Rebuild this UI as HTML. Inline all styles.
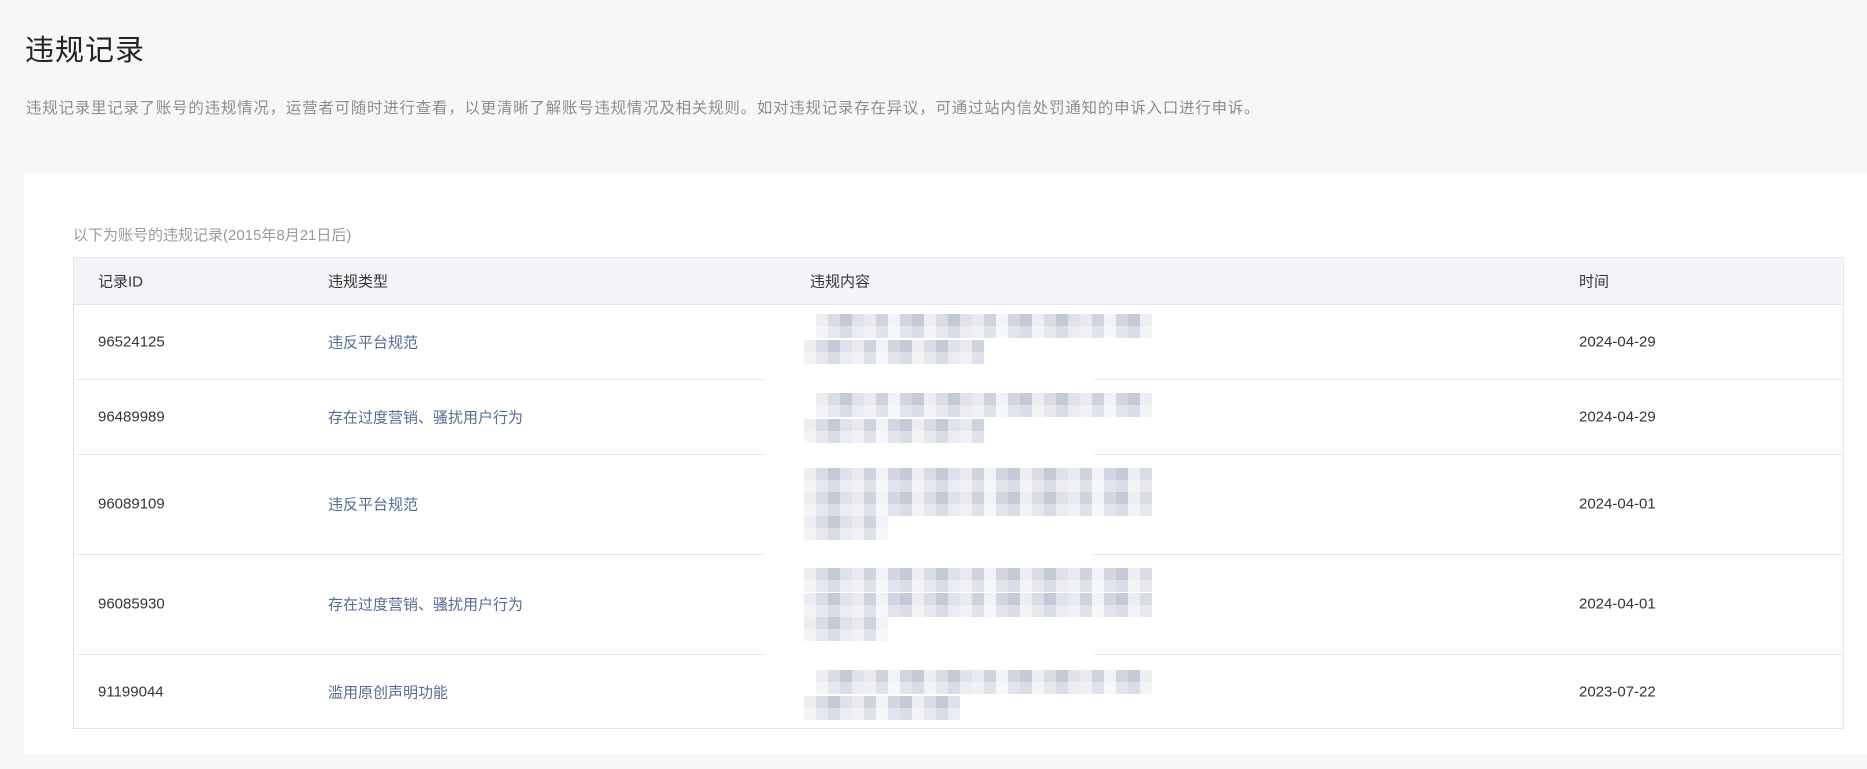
<!DOCTYPE html>
<html><head><meta charset="utf-8"><style>
*{margin:0;padding:0;box-sizing:border-box}
body{width:1867px;height:769px;background:#f6f7f9;font-family:"Liberation Sans","Noto Sans CJK SC",sans-serif;position:relative;overflow:hidden;color:#353535}
.abs{position:absolute;white-space:nowrap}
h1{position:absolute;left:25px;top:27px;font-size:29px;font-weight:normal;color:#222;letter-spacing:1px}
.desc{left:26px;top:96px;font-size:15.4px;color:#8d8d8d;letter-spacing:0.85px}
.card{position:absolute;left:24px;top:173px;right:0;height:581px;background:#fff}
.sub{left:73px;top:224px;font-size:15px;color:#9a9a9a}
.tbl{position:absolute;left:73px;top:257px;width:1771px;height:472px;border:1px solid #e4e6eb}
.hd{position:absolute;left:0;top:0;width:100%;height:47px;background:#f3f4f7;border-bottom:1px solid #e4e6eb}
.rb{position:absolute;left:0;width:100%;border-top:1px solid #e7e8ec}
.t{position:absolute;font-size:15px;white-space:nowrap;transform:translateY(-50%)}
.b{color:#576b95}
.px{position:absolute;height:24px;background:
linear-gradient(#fff0 0 12px,rgba(255,255,255,.35) 12px 24px),
repeating-linear-gradient(90deg,#eceef2 0 12px,#d9dce5 12px 24px,#c4c9d7 24px 36px,#dfe2ea 36px 48px,#e9eaf0 48px 60px,#cfd3de 60px 72px,#f2f3f6 72px 84px,#d3d6e1 84px 96px,#c6cad8 96px 108px)}
</style></head><body>
<h1>违规记录</h1>
<div class="abs desc">违规记录里记录了账号的违规情况，运营者可随时进行查看，以更清晰了解账号违规情况及相关规则。如对违规记录存在异议，可通过站内信处罚通知的申诉入口进行申诉。</div>
<div class="card"></div>
<div class="abs sub">以下为账号的违规记录(2015年8月21日后)</div>
<div class="tbl">
<div class="hd"></div>
<div class="rb" style="top:121px"></div>
<div class="rb" style="top:196px"></div>
<div class="rb" style="top:296px"></div>
<div class="rb" style="top:396px"></div>
<div style="position:absolute;left:690px;top:110px;width:330px;height:300px;background:#fff"></div>
</div>
<div class="t" style="left:98px;top:281px">记录ID</div>
<div class="t" style="left:328px;top:281px">违规类型</div>
<div class="t" style="left:810px;top:281px">违规内容</div>
<div class="t" style="left:1579px;top:281px">时间</div>

<div class="t" style="left:98px;top:342px">96524125</div>
<div class="t b" style="left:328px;top:342px">违反平台规范</div>
<div class="t" style="left:1579px;top:342px">2024-04-29</div>
<div class="px" style="left:816px;top:314px;width:336px"></div>
<div class="px" style="left:804px;top:340px;width:180px"></div>

<div class="t" style="left:98px;top:417px">96489989</div>
<div class="t b" style="left:328px;top:417px">存在过度营销、骚扰用户行为</div>
<div class="t" style="left:1579px;top:417px">2024-04-29</div>
<div class="px" style="left:816px;top:393px;width:336px"></div>
<div class="px" style="left:804px;top:419px;width:180px"></div>

<div class="t" style="left:98px;top:504px">96089109</div>
<div class="t b" style="left:328px;top:504px">违反平台规范</div>
<div class="t" style="left:1579px;top:504px">2024-04-01</div>
<div class="px" style="left:804px;top:468px;width:348px"></div>
<div class="px" style="left:804px;top:492px;width:348px"></div>
<div class="px" style="left:804px;top:516px;width:84px"></div>

<div class="t" style="left:98px;top:604px">96085930</div>
<div class="t b" style="left:328px;top:604px">存在过度营销、骚扰用户行为</div>
<div class="t" style="left:1579px;top:604px">2024-04-01</div>
<div class="px" style="left:804px;top:568px;width:348px"></div>
<div class="px" style="left:804px;top:593px;width:348px"></div>
<div class="px" style="left:804px;top:617px;width:84px"></div>

<div class="t" style="left:98px;top:692px">91199044</div>
<div class="t b" style="left:328px;top:692px">滥用原创声明功能</div>
<div class="t" style="left:1579px;top:692px">2023-07-22</div>
<div class="px" style="left:816px;top:670px;width:336px"></div>
<div class="px" style="left:804px;top:696px;width:156px"></div>
</body></html>
